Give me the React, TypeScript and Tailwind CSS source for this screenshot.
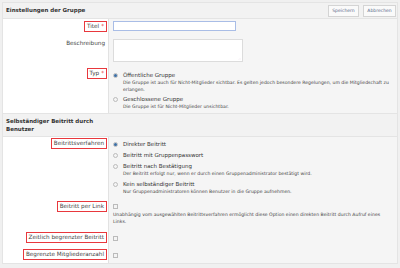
import React from "react";

const font = { fontFamily: '"DejaVu Sans", Verdana, sans-serif' };

function Label({ text, required, boxed = true }: { text: string; required?: boolean; boxed?: boolean }) {
  return (
    <span
      className={
        boxed
          ? "inline-block border border-[#e8383d] px-[2px] py-[1px] text-[5.7px] leading-[7px] text-[#444]"
          : "inline-block px-[2px] py-[1px] text-[5.7px] leading-[7px] text-[#444]"
      }
    >
      {text}
      {required && <span className="ml-[2px] text-[#e8383d]">*</span>}
    </span>
  );
}

function Radio({ checked }: { checked?: boolean }) {
  return (
    <span className="mt-[1px] flex h-[5px] w-[5px] shrink-0 items-center justify-center rounded-full border border-[#bbb] bg-[#f4f4f4]">
      {checked && <span className="h-[3px] w-[3px] rounded-full bg-[#3a6ea5]" />}
    </span>
  );
}

function Check() {
  return <span className="block h-[5px] w-[5px] border border-[#bbb] bg-[#f4f4f4]" />;
}

function Option({ checked, title, desc }: { checked?: boolean; title: string; desc?: string }) {
  return (
    <div className="flex gap-[5px]">
      <Radio checked={checked} />
      <div className="flex flex-col">
        <span className="text-[5.5px] leading-[7px] text-[#333]">{title}</span>
        {desc && <span className="text-[4.6px] leading-[7px] text-[#444]">{desc}</span>}
      </div>
    </div>
  );
}

function Row({ label, children, className = "" }: { label: React.ReactNode; children: React.ReactNode; className?: string }) {
  return (
    <div className="flex">
      <div className={"flex w-[106px] shrink-0 items-start justify-end border-r border-[#e2e2e2] bg-white pr-[1px] " + className}>
        {label}
      </div>
      <div className={"flex-1 pl-[4px] pr-[4px] " + className}>{children}</div>
    </div>
  );
}

export default function App() {
  return (
    <div className="h-[268px] w-[400px] overflow-hidden bg-[#f0f0f0] px-[2px] pt-[2px] text-[5px] leading-[7px]" style={font}>
      <div className="border border-[#e4e4e4] bg-[#f5f5f5]">
        <div className="flex h-[16px] items-center justify-between border-b border-[#e4e4e4] bg-[#f2f2f2] pl-[3px] pr-[1px]">
          <span className="text-[5.5px] font-bold text-[#333]">Einstellungen der Gruppe</span>
          <div className="flex gap-[4px]">
            <button className="h-[12px] w-[31px] border border-[#d4d4d4] bg-[#fafafa] text-[4.5px] text-[#5a6a8a]">Speichern</button>
            <button className="h-[12px] w-[33px] border border-[#d4d4d4] bg-[#fafafa] text-[4.5px] text-[#5a6a8a]">Abbrechen</button>
          </div>
        </div>

        <Row label={<Label text="Titel" required />} className="pt-[2px] pb-[5px]">
          <div className="h-[10px] w-[123px] border border-[#a9bde6] bg-white" />
        </Row>
        <Row label={<Label text="Beschreibung" boxed={false} />} className="pt-[2px] pb-[3px]">
          <div className="relative h-[23px] w-[130px] border border-[#dcdcdc] bg-white">
            <span className="absolute right-[1px] bottom-[0px] text-[3px] leading-[3px] text-[#999]">.::</span>
          </div>
        </Row>
        <Row label={<Label text="Typ" required />} className="pt-[3px] pb-[3px]">
          <div className="flex flex-col gap-[3px] pt-[4px]">
            <Option
              checked
              title="Öffentliche Gruppe"
              desc="Die Gruppe ist auch für Nicht-Mitglieder sichtbar. Es gelten jedoch besondere Regelungen, um die Mitgliedschaft zu erlangen."
            />
            <Option title="Geschlossene Gruppe" desc="Die Gruppe ist für Nicht-Mitglieder unsichtbar." />
          </div>
        </Row>

        <div className="border-y border-[#e4e4e4] bg-[#f2f2f2] pt-[3px] pb-[3px] pl-[3px]">
          <div className="w-[92px] text-[5.5px] font-bold leading-[8px] text-[#333]">Selbständiger Beitritt durch Benutzer</div>
        </div>

        <Row label={<Label text="Beitrittsverfahren" />} className="pt-[1px] pb-[3px]">
          <div className="flex flex-col gap-[4px] pt-[3px]">
            <Option checked title="Direkter Beitritt" />
            <Option title="Beitritt mit Gruppenpasswort" />
            <Option
              title="Beitritt nach Bestätigung"
              desc="Der Beitritt erfolgt nur, wenn er durch einen Gruppenadministrator bestätigt wird."
            />
            <Option
              title="Kein selbständiger Beitritt"
              desc="Nur Gruppenadministratoren können Benutzer in die Gruppe aufnehmen."
            />
          </div>
        </Row>
        <Row label={<Label text="Beitritt per Link" />} className="pt-[3px] pb-[4px]">
          <div className="pt-[3px]">
            <Check />
            <p className="mt-[2px] w-[270px] text-[4.6px] leading-[7px] text-[#444]">
              Unabhängig vom ausgewählten Beitrittsverfahren ermöglicht diese Option einen direkten Beitritt durch Aufruf eines Links.
            </p>
          </div>
        </Row>
        <Row label={<Label text="Zeitlich begrenzter Beitritt" />} className="pt-[3px] pb-[3px]">
          <div className="pt-[4px]">
            <Check />
          </div>
        </Row>
        <Row label={<Label text="Begrenzte Mitgliederanzahl" />} className="pt-[3px] pb-[3px]">
          <div className="pt-[4px]">
            <Check />
          </div>
        </Row>
      </div>
    </div>
  );
}
